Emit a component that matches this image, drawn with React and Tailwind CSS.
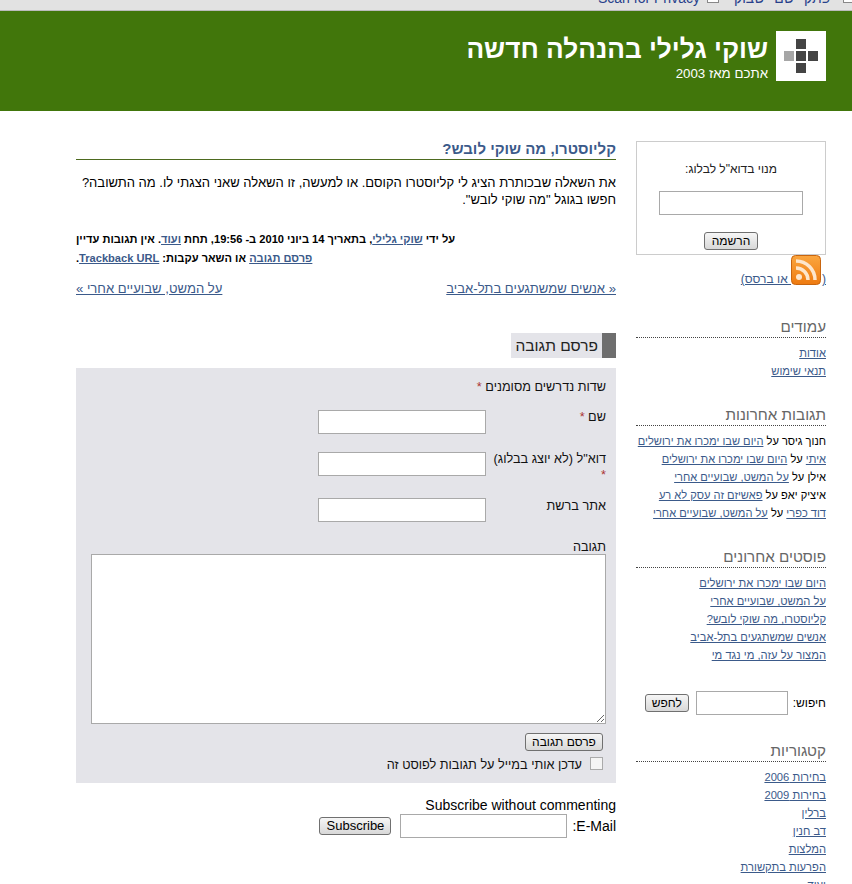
import React from 'react';

const font = { fontFamily: '"Liberation Sans", Arial, sans-serif' };

function Btn({ children, className = '' }) {
  return (
    <button className={`h-[18px] px-[7px] rounded-[3px] border border-[#707070] bg-gradient-to-b from-[#f6f6f6] to-[#d8d8d8] text-[12px] leading-[14px] text-black ${className}`}>
      {children}
    </button>
  );
}

function Field({ className = '' }) {
  return <input className={`block bg-white border border-[#a9a9a9] h-[24px] ${className}`} />;
}

function A({ children, className = '' }) {
  return <a href="#" className={`text-[#3b5a8a] underline ${className}`}>{children}</a>;
}

function Rss() {
  return (
    <svg width="30" height="30" viewBox="0 0 30 30" className="inline-block align-[-2px] mr-[1px]">
      <defs>
        <linearGradient id="rssFill" x1="0" y1="0" x2="0" y2="1">
          <stop offset="0" stopColor="#fba63f" />
          <stop offset="1" stopColor="#ee7a10" />
        </linearGradient>
      </defs>
      <rect x="0.5" y="0.5" width="29" height="29" rx="4" fill="url(#rssFill)" stroke="#c8650f" />
      <circle cx="8" cy="22" r="3" fill="#fde6cc" />
      <path d="M5 13a12 12 0 0 1 12 12" fill="none" stroke="#fde6cc" strokeWidth="3.5" />
      <path d="M5 6a19 19 0 0 1 19 19" fill="none" stroke="#fde6cc" strokeWidth="3.5" />
    </svg>
  );
}

function Widget({ title, className = '', children }) {
  return (
    <div className={className}>
      <h3 className="text-[15.2px] leading-[20px] text-[#666] border-b border-dotted border-[#444] mb-[6px] font-normal">{title}</h3>
      {children}
    </div>
  );
}

function Links({ items }) {
  return (
    <ul className="text-[11.2px] leading-[18px]">
      {items.map((t) => <li key={t}><A>{t}</A></li>)}
    </ul>
  );
}

function Sidebar() {
  return (
    <aside className="w-[190px] shrink-0 pt-[30px]">
      <div className="h-[114px] border border-[#ccc] flex flex-col items-center pt-[19px]">
        <p className="text-[12px] leading-[16px] text-[#222]">מנוי בדוא"ל לבלוג:</p>
        <Field className="w-[144px] h-[22px] mt-[14px]" />
        <Btn className="mt-[17px]">הרשמה</Btn>
      </div>
      <div className="h-[38px] text-[12px] leading-[14px]">
        <a href="#" className="text-[#3b5a8a] underline">
          (<Rss /> או ברסס)
        </a>
      </div>
      <Widget title="עמודים" className="mt-[24px]">
        <Links items={['אודות', 'תנאי שימוש']} />
      </Widget>
      <Widget title="תגובות אחרונות" className="mt-[25px]">
        <ul className="text-[11.1px] leading-[18px] text-black">
          <li>חנוך גיסר על <A>היום שבו ימכרו את ירושלים</A></li>
          <li><A className="line-through">איתי</A> על <A>היום שבו ימכרו את ירושלים</A></li>
          <li>אילן על <A>על המשט, שבועיים אחרי</A></li>
          <li>איציק יאפ על <A>פאשיזם זה עסק לא רע</A></li>
          <li><A className="line-through">דוד כפרי</A> על <A>על המשט, שבועיים אחרי</A></li>
        </ul>
      </Widget>
      <Widget title="פוסטים אחרונים" className="mt-[25px]">
        <Links items={['היום שבו ימכרו את ירושלים', 'על המשט, שבועיים אחרי', 'קליוסטרו, מה שוקי לובש?', 'אנשים שמשתגעים בתל-אביב', 'המצור על עזה, מי נגד מי']} />
      </Widget>
      <div className="flex items-center mt-[27px] text-[12px] text-black">
        <span>חיפוש:</span>
        <Field className="w-[92px] h-[22px] mr-[5px] ml-[7px]" />
        <Btn className="w-[44px] !px-0">לחפש</Btn>
      </div>
      <Widget title="קטגוריות" className="mt-[26px]">
        <Links items={['בחירות 2006', 'בחירות 2009', 'ברלין', 'דב חנין', 'המלצות', 'הפרעות בתקשורת', 'ועוד']} />
      </Widget>
    </aside>
  );
}

function Main() {
  return (
    <main className="w-[540px] shrink-0 pt-[28px] text-[12px] text-black">
      <h2 className="text-[15px] leading-[20px] font-bold text-[#3b5a8a] border-b border-[#4d6a1f]">קליוסטרו, מה שוקי לובש?</h2>
      <p className="mt-[14px] text-[13px] leading-[17px]">
        את השאלה שבכותרת הציג לי קליוסטרו הקוסם. או למעשה, זו השאלה שאני הצגתי לו. מה התשובה? חפשו בגוגל "מה שוקי לובש".
      </p>
      <div className="mt-[22px] text-[11.1px] leading-[19px] font-bold text-left">
        <p>על ידי <A>שוקי גלילי</A>, בתאריך 14 ביוני 2010 ב- 19:56, תחת <A>ועוד</A>. אין תגובות עדיין</p>
        <p><A>פרסם תגובה</A> או השאר עקבות: <A>Trackback URL</A>.</p>
      </div>
      <div className="flex justify-between mt-[12px] text-[13.1px] leading-[18px]">
        <A>« אנשים שמשתגעים בתל-אביב</A>
        <A>על המשט, שבועיים אחרי »</A>
      </div>
      <div className="mt-[35px] w-[105px] h-[25px] bg-[#e4e4e9] border-r-[14px] border-[#6e6e6e] pr-[4px] text-[15.5px] leading-[25px] text-[#222]">פרסם תגובה</div>
      <form className="mt-[10px] h-[415px] bg-[#e4e4e9] px-[10px] pt-[11px] text-[12.7px] leading-[16px] text-[#111]">
        <p>שדות נדרשים מסומנים <span className="text-[#a33]">*</span></p>
        <div className="flex mt-[15px] h-[42px]">
          <label className="w-[120px] -mt-[1px]">שם <span className="text-[#a33]">*</span></label>
          <Field className="w-[168px]" />
        </div>
        <div className="flex h-[46px]">
          <label className="w-[120px] -mt-[1px]">דוא"ל (לא יוצג בבלוג) <span className="text-[#a33]">*</span></label>
          <Field className="w-[168px]" />
        </div>
        <div className="flex h-[41px]">
          <label className="w-[120px]">אתר ברשת</label>
          <Field className="w-[168px]" />
        </div>
        <label className="block -mb-[1px]">תגובה</label>
        <textarea dir="ltr" className="block w-[515px] h-[170px] bg-white border border-[#a9a9a9]" />
        <div className="flex mt-[9px] mr-[3px]"><Btn className="w-[78px] !px-0">פרסם תגובה</Btn></div>
        <div className="flex items-start mt-[6px] mr-[3px]">
          <input type="checkbox" className="w-[13px] h-[13px] appearance-none bg-[#f4f4f4] border border-[#aaa]" />
          <span className="mr-[8px]">עדכן אותי במייל על תגובות לפוסט זה</span>
        </div>
      </form>
      <div className="mt-[14px] text-[14px] leading-[17px]">
        <p>Subscribe without commenting</p>
        <div className="flex items-center">
          <span>E-Mail:</span>
          <Field className="w-[167px] h-[22px] mr-[5px] ml-[9px]" />
          <Btn className="text-[13px] w-[72px] !px-0">Subscribe</Btn>
        </div>
      </div>
    </main>
  );
}

export default function App() {
  return (
    <div dir="rtl" style={font} className="h-[884px] overflow-hidden bg-white">
      <div className="h-[11px] bg-[#e2e2e2] border-b border-[#bbb] overflow-hidden text-[14px] leading-[14px] text-[#27408b]" dir="ltr">
        <div className="flex -mt-[9px] pl-[598px]">
          <span className="whitespace-nowrap">Scan for Privacy</span>
          <span className="ml-[7px] shrink-0 w-[12px] h-[12px] bg-white border border-[#888]" />
          <span dir="rtl" className="ml-[15px] whitespace-nowrap [word-spacing:6px]">פתק שם שבוק</span>
          <span className="ml-[13px] shrink-0 w-[12px] h-[12px] bg-white border border-[#888]" />
        </div>
      </div>
      <header className="h-[100px] bg-[#41760b] flex pr-[26px] pt-[20px]">
        <div className="w-[50px] h-[50px] bg-white grid grid-cols-[10px_10px_10px] grid-rows-[10px_10px_10px] gap-[2px] justify-center content-center" dir="ltr">
          <span /><span className="bg-[#444]" /><span />
          <span className="bg-[#a6a6a6]" /><span className="bg-[#444]" /><span className="bg-[#444]" />
          <span /><span className="bg-[#444]" /><span />
        </div>
        <div className="mr-[8px] text-white">
          <h1 className="text-[26.2px] leading-[36px] font-bold">שוקי גלילי בהנהלה חדשה</h1>
          <p className="text-[13.3px] leading-[16px] -mt-[1px]">אתכם מאז 2003</p>
        </div>
      </header>
      <div className="flex pr-[26px] gap-[20px]">
        <Sidebar />
        <Main />
      </div>
    </div>
  );
}
